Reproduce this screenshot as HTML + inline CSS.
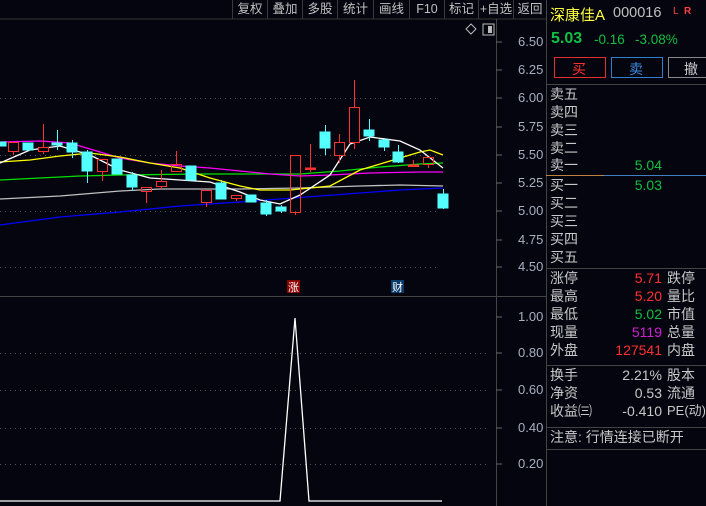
<!DOCTYPE html>
<html><head><meta charset="utf-8"><style>
*{margin:0;padding:0;box-sizing:border-box}
body{width:706px;height:506px;background:#05050f;overflow:hidden;position:relative;font-family:"Liberation Sans","Noto Sans CJK SC",sans-serif;font-size:13px;color:#c8c8c8}
.a{position:absolute;white-space:nowrap}
.tb{position:absolute;top:0;height:19px;border-left:1px solid #3a3a3a;color:#c0c0c0;font-size:12.5px;line-height:18px;text-align:center}
.r{color:#ff3030}.g{color:#10c040}.m{color:#d020d0}
.rp{position:absolute;left:546px;top:0;width:160px;height:506px;overflow:hidden;line-height:18px;font-size:14px}
.rp .a{left:4px}
.rp .k{left:121px}
.rp .v{left:auto;right:44px}
</style></head><body>
<svg class="a" style="left:0;top:0" width="706" height="506">
<line x1="0" y1="19" x2="546" y2="19" stroke="#333"/>
<line x1="496.5" y1="19" x2="496.5" y2="506" stroke="#444"/>
<line x1="546.5" y1="0" x2="546.5" y2="506" stroke="#444"/>
<line x1="0" y1="296.5" x2="546" y2="296.5" stroke="#444"/>
<g stroke="#555" stroke-dasharray="1,4">
<line x1="0" y1="98.5" x2="440" y2="98.5"/><line x1="0" y1="155.5" x2="440" y2="155.5"/><line x1="0" y1="211.5" x2="440" y2="211.5"/><line x1="0" y1="267.5" x2="440" y2="267.5"/>
<line x1="0" y1="353.5" x2="490" y2="353.5"/><line x1="0" y1="390.5" x2="490" y2="390.5"/><line x1="0" y1="428.5" x2="490" y2="428.5"/><line x1="0" y1="464.5" x2="490" y2="464.5"/>
</g>
<g stroke="#666"><line x1="496" y1="42" x2="502" y2="42"/><line x1="496" y1="70" x2="502" y2="70"/><line x1="496" y1="98" x2="502" y2="98"/><line x1="496" y1="127" x2="502" y2="127"/><line x1="496" y1="155" x2="502" y2="155"/><line x1="496" y1="183" x2="502" y2="183"/><line x1="496" y1="211" x2="502" y2="211"/><line x1="496" y1="240" x2="502" y2="240"/><line x1="496" y1="267" x2="502" y2="267"/>
<line x1="496" y1="317" x2="502" y2="317"/><line x1="496" y1="353" x2="502" y2="353"/><line x1="496" y1="390" x2="502" y2="390"/><line x1="496" y1="428" x2="502" y2="428"/><line x1="496" y1="464" x2="502" y2="464"/></g>
<g fill="none" stroke-width="1.3">
<polyline stroke="#0000ff" points="0,225 60,217 120,212 180,206 240,202 280,199 320,196 360,193 400,190 443,188"/>
<polyline stroke="#c0c0c0" points="0,199 60,196 120,191 160,189 240,189 300,188 360,186 400,185 443,186"/>
<polyline stroke="#00e000" points="0,180 40,178 80,176 120,175 200,174 300,174 340,171 380,167 420,164 443,163"/>
<polyline stroke="#ff00ff" points="0,142 40,141 70,143 90,149 120,158 150,163 180,166 210,168 240,171 270,174 300,176 330,175 370,173 420,172 443,172"/>
<polyline stroke="#ffff00" points="0,162 30,160 60,156 90,153 120,157 150,163 180,168 210,178 240,186 260,190 290,190 310,188 330,186 360,170 390,161 420,152 430,150 443,155"/>
<polyline stroke="#ffffff" points="0,163 30,150 60,146 90,155 120,170 150,178 180,180 210,182 240,192 260,200 280,204 300,195 330,175 350,144 370,137 400,141 420,150 443,168"/>
</g>
<g stroke="#54ffff" fill="#54ffff">
<rect x="0" y="142" width="6" height="4"/>
<rect x="23" y="143" width="10" height="7"/>
<line x1="57.5" y1="130" x2="57.5" y2="150"/><rect x="52" y="143" width="10" height="2"/>
<line x1="72.5" y1="140" x2="72.5" y2="158"/><rect x="67" y="143" width="10" height="9"/>
<line x1="87.5" y1="150" x2="87.5" y2="183"/><rect x="82" y="152" width="10" height="19"/>
<rect x="112" y="159" width="10" height="15"/>
<line x1="132.5" y1="172" x2="132.5" y2="191"/><rect x="127" y="175" width="10" height="12"/>
<rect x="186" y="166" width="10" height="14"/>
<line x1="221.5" y1="180" x2="221.5" y2="199"/><rect x="216" y="183" width="10" height="16"/>
<rect x="246" y="195" width="10" height="7"/>
<line x1="266.5" y1="200" x2="266.5" y2="216"/><rect x="261" y="203" width="10" height="11"/>
<line x1="281.5" y1="205" x2="281.5" y2="213"/><rect x="276" y="207" width="10" height="4"/>
<line x1="325.5" y1="125" x2="325.5" y2="155"/><rect x="320" y="132" width="10" height="16"/>
<line x1="369.5" y1="119" x2="369.5" y2="141"/><rect x="364" y="130" width="10" height="6"/>
<line x1="384.5" y1="138" x2="384.5" y2="151"/><rect x="379" y="140" width="10" height="7"/>
<line x1="398.5" y1="145" x2="398.5" y2="163"/><rect x="393" y="152" width="10" height="10"/>
<line x1="443.5" y1="189" x2="443.5" y2="209"/><rect x="438" y="194" width="10" height="14"/>
</g>
<g stroke="#ff3030" fill="none">
<line x1="13.5" y1="151" x2="13.5" y2="155"/><rect x="8.5" y="142.5" width="10" height="9"/>
<line x1="43.5" y1="124" x2="43.5" y2="154"/><rect x="38.5" y="147.5" width="10" height="4" fill="#05050f"/>
<line x1="102.5" y1="172" x2="102.5" y2="181"/><rect x="97.5" y="159.5" width="10" height="12"/>
<line x1="146.5" y1="191" x2="146.5" y2="203"/><rect x="141.5" y="187.5" width="10" height="4"/>
<line x1="161.5" y1="170" x2="161.5" y2="189"/><rect x="156.5" y="181.5" width="10" height="5" fill="#05050f"/>
<line x1="176.5" y1="151" x2="176.5" y2="164"/><rect x="171.5" y="164.5" width="10" height="7"/>
<line x1="206.5" y1="202" x2="206.5" y2="207"/><rect x="201.5" y="190.5" width="10" height="12"/>
<line x1="236.5" y1="198" x2="236.5" y2="201"/><rect x="231.5" y="195.5" width="10" height="3"/>
<line x1="295.5" y1="212" x2="295.5" y2="215"/><rect x="290.5" y="155.5" width="10" height="57"/>
<line x1="310.5" y1="144" x2="310.5" y2="172"/><rect x="305.5" y="168" width="10" height="1.5" fill="#ff3030"/>
<line x1="339.5" y1="134" x2="339.5" y2="163"/><rect x="334.5" y="142.5" width="10" height="13" fill="#05050f"/>
<line x1="354.5" y1="80" x2="354.5" y2="149"/><rect x="349.5" y="107.5" width="10" height="35" fill="#05050f"/>
<line x1="413.5" y1="160" x2="413.5" y2="167"/><rect x="408.5" y="165" width="10" height="1.5" fill="#ff3030"/>
<line x1="428.5" y1="164" x2="428.5" y2="168"/><rect x="423.5" y="157.5" width="10" height="7"/>
</g>
<polyline fill="none" stroke="#fff" stroke-width="1.3" points="0,501 280,501 295,318 309,501 442,501"/>
<rect x="287" y="280" width="13" height="13" fill="#8b0000"/>
<rect x="391" y="280" width="13" height="13" fill="#0a3a6a"/>
<rect x="483" y="24" width="11" height="11" fill="none" stroke="#bbb"/><rect x="488" y="26" width="4" height="7" fill="#bbb"/>
<path d="M471 24 L476 29 L471 34 L466 29 Z" fill="none" stroke="#bbb"/>
<line x1="546" y1="84.5" x2="706" y2="84.5" stroke="#444"/>
<line x1="546" y1="175.5" x2="604" y2="175.5" stroke="#c08040"/><line x1="604" y1="175.5" x2="706" y2="175.5" stroke="#4080c0"/>
<line x1="546" y1="268.5" x2="706" y2="268.5" stroke="#444"/>
<line x1="546" y1="365.5" x2="706" y2="365.5" stroke="#444"/>
<line x1="546" y1="427.5" x2="706" y2="427.5" stroke="#444"/>
<line x1="546" y1="449.5" x2="706" y2="449.5" stroke="#444"/>
<rect x="554.5" y="57.5" width="51" height="20" fill="none" stroke="#e03030"/>
<rect x="611.5" y="57.5" width="51" height="20" fill="none" stroke="#3080d0"/>
<rect x="668.5" y="57.5" width="45" height="20" fill="none" stroke="#888"/>
</svg>
<div class="tb" style="left:232px;width:35px">复权</div>
<div class="tb" style="left:267px;width:35px">叠加</div>
<div class="tb" style="left:302px;width:35px">多股</div>
<div class="tb" style="left:337px;width:36px">统计</div>
<div class="tb" style="left:373px;width:36px">画线</div>
<div class="tb" style="left:409px;width:35px">F10</div>
<div class="tb" style="left:444px;width:34px">标记</div>
<div class="tb" style="left:478px;width:35px">+自选</div>
<div class="tb" style="left:513px;width:33px">返回</div>
<div class="a" style="left:288px;top:279px;font-size:11px;color:#fff">涨</div>
<div class="a" style="left:392px;top:279px;font-size:11px;color:#fff">财</div>
<div style="position:absolute;left:518px;top:0;color:#a8b0c0;font-size:13px;line-height:1">
<div class="a" style="top:35px">6.50</div><div class="a" style="top:63px">6.25</div><div class="a" style="top:91px">6.00</div><div class="a" style="top:120px">5.75</div><div class="a" style="top:148px">5.50</div><div class="a" style="top:176px">5.25</div><div class="a" style="top:204px">5.00</div><div class="a" style="top:233px">4.75</div><div class="a" style="top:260px">4.50</div>
<div class="a" style="top:310px">1.00</div><div class="a" style="top:346px">0.80</div><div class="a" style="top:383px">0.60</div><div class="a" style="top:421px">0.40</div><div class="a" style="top:457px">0.20</div>
</div>
<div class="a" style="left:550px;top:4px;font-size:15px;color:#ffff40">深康佳A</div>
<div class="a" style="left:613px;top:5px;font-size:14.5px;color:#c0c0c0">000016</div>
<div class="a" style="left:673px;top:6px;font-size:10px;color:#ff4040">L</div>
<div class="a" style="left:684px;top:6px;font-size:10px;color:#ff4040;font-weight:bold">R</div>
<div class="a g" style="left:551px;top:30px;font-size:16px;font-weight:bold">5.03</div>
<div class="a g" style="left:594px;top:32px;font-size:13.5px">-0.16</div>
<div class="a g" style="left:635px;top:32px;font-size:13.5px">-3.08%</div>
<div class="a" style="left:572px;top:59px;color:#ff3030;font-size:14px">买</div>
<div class="a" style="left:629px;top:59px;color:#3a8ae0;font-size:14px">卖</div>
<div class="a" style="left:684px;top:59px;color:#ccc;font-size:14px">撤</div>
<div class="rp">
<div class="a" style="top:85px">卖五</div><div class="a" style="top:103px">卖四</div><div class="a" style="top:121px">卖三</div><div class="a" style="top:139px">卖二</div><div class="a" style="top:156px">卖一</div>
<div class="a" style="top:176px">买一</div><div class="a" style="top:194px">买二</div><div class="a" style="top:212px">买三</div><div class="a" style="top:230px">买四</div><div class="a" style="top:248px">买五</div>
<div class="a" style="top:269px">涨停</div><div class="a" style="top:287px">最高</div><div class="a" style="top:305px">最低</div><div class="a" style="top:323px">现量</div><div class="a" style="top:341px">外盘</div>
<div class="a" style="top:366px">换手</div><div class="a" style="top:384px">净资</div><div class="a" style="top:402px">收益㈢</div>
<div class="a" style="top:428px">注意: 行情连接已断开</div>
<div class="a k" style="top:269px">跌停</div><div class="a k" style="top:287px">量比</div><div class="a k" style="top:305px">市值</div><div class="a k" style="top:323px">总量</div><div class="a k" style="top:341px">内盘</div>
<div class="a k" style="top:366px">股本</div><div class="a k" style="top:384px">流通</div><div class="a k" style="top:402px;font-size:13px">PE(动)</div>
<div class="a v g" style="top:156px">5.04</div><div class="a v g" style="top:176px">5.03</div>
<div class="a v r" style="top:269px">5.71</div>
<div class="a v r" style="top:287px">5.20</div>
<div class="a v g" style="top:305px">5.02</div>
<div class="a v m" style="top:323px">5119</div>
<div class="a v r" style="top:341px">127541</div>
<div class="a v" style="top:366px">2.21%</div>
<div class="a v" style="top:384px">0.53</div>
<div class="a v" style="top:402px">-0.410</div>
</div>
</body></html>
